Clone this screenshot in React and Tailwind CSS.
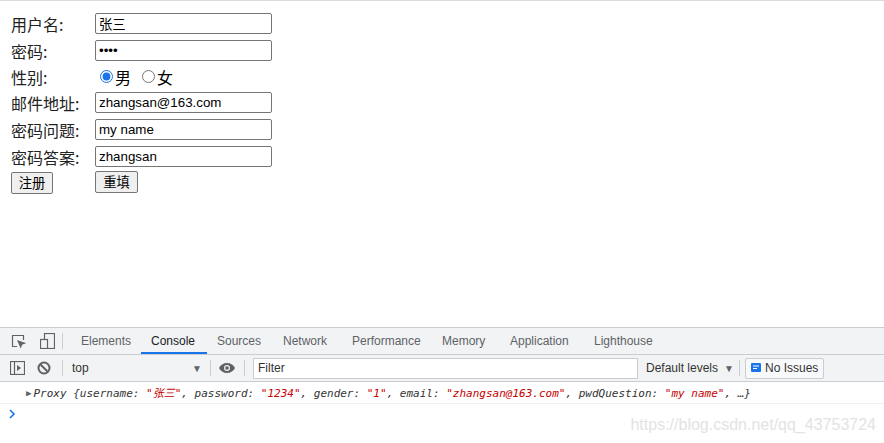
import { useState } from "react"

const cn = { fontFamily: '"Microsoft YaHei", "Noto Sans CJK SC", sans-serif' }
const inputFont = { fontFamily: '"Liberation Sans", "Noto Sans CJK SC", sans-serif' }
const ui = { fontFamily: '"Liberation Sans", Arial, "Noto Sans CJK SC", sans-serif' }
const mono = { fontFamily: '"DejaVu Sans Mono", "Liberation Mono", "Noto Sans CJK SC", monospace' }

function Field({ label, children, h = "h-[27px]" }) {
  return (
    <div className={`flex items-center ${h}`}>
      <div className="w-[84px] text-[16px] text-[#222] leading-none" style={cn}>{label}</div>
      {children}
    </div>
  )
}

function TextBox({ value, type = "text" }) {
  return (
    <input
      type={type}
      defaultValue={value}
      className="w-[177px] h-[21px] border border-[#767676] rounded-[2px] px-[3px] text-[13.33px] text-black bg-white outline-none"
      style={inputFont}
    />
  )
}

const tabs = [
  ["Elements", "w-[70px]"],
  ["Console", "w-[66px]"],
  ["Sources", "w-[66px]"],
  ["Network", "w-[69px]"],
  ["Performance", "w-[90px]"],
  ["Memory", "w-[68px]"],
  ["Application", "w-[84px]"],
  ["Lighthouse", "w-[80px]"],
]

export default function App() {
  const [gender, setGender] = useState("1")

  return (
    <div className="w-[884px] h-[443px] bg-white flex flex-col overflow-hidden">
      <div className="h-px bg-[#dadce0]" />
      <div className="flex-1 pl-[11px] pt-[9px]">
        <Field label="用户名:"><TextBox value="张三" /></Field>
        <Field label="密码:"><TextBox value="1234" type="password" /></Field>
        <Field label="性别:" h="h-[25px]">
          <div className="flex items-center text-[16px] text-black" style={cn}>
            <input type="radio" name="g" checked={gender === "1"} onChange={() => setGender("1")} className="ml-[5px] mr-[2px] w-[13px] h-[13px] accent-[#1a73e8]" />
            <span>男</span>
            <input type="radio" name="g" checked={gender === "0"} onChange={() => setGender("0")} className="ml-[11px] mr-[2px] w-[13px] h-[13px]" />
            <span>女</span>
          </div>
        </Field>
        <Field label="邮件地址:"><TextBox value="zhangsan@163.com" /></Field>
        <Field label="密码问题:"><TextBox value="my name" /></Field>
        <Field label="密码答案:"><TextBox value="zhangsan" /></Field>
        <div className="flex items-center h-[24px]">
          <div className="w-[84px]">
            <button className="h-[22px] w-[42px] border border-[#767676] rounded-[2px] bg-[#efefef] text-[13.33px] text-black" style={cn}>注册</button>
          </div>
          <button className="h-[22px] w-[43px] border border-[#767676] rounded-[2px] bg-[#efefef] text-[13.33px] text-black" style={cn}>重填</button>
        </div>
      </div>

      {/* devtools */}
      <div className="h-[116px] border-t border-[#cbcdd1] flex flex-col text-[12px]" style={ui}>
        <div className="h-[27px] bg-[#f1f3f4] flex items-center border-b border-[#cbcdd1]">
          <div className="w-[34px] flex justify-center pl-[2px]">
            <svg width="15" height="15" viewBox="0 0 15 15" fill="none" stroke="#5f6368" strokeWidth="1.2">
              <path d="M6 12.5H1.5V1.5h11V6" />
              <path d="M7 7l6.5 2.2-2.8 1 -1 2.8z" fill="#5f6368" />
            </svg>
          </div>
          <div className="w-[26px] flex justify-center">
            <svg width="15" height="16" viewBox="0 0 15 16" fill="none" stroke="#5f6368" strokeWidth="1.2">
              <rect x="4.5" y="0.5" width="10" height="15" />
              <rect x="0.5" y="6.5" width="7" height="9" fill="#f1f3f4" />
            </svg>
          </div>
          <div className="w-px h-[16px] bg-[#cbcdd1] ml-[2px] mr-[8px]" />
          {tabs.map(([t, w]) => (
            <div
              key={t}
              className={`h-full flex items-center pl-[10px] pt-[1px] ${w} ${t === "Console" ? "text-[#202124] border-b-2 border-[#1a73e8]" : "text-[#5f6368] border-b-2 border-transparent"}`}
            >
              {t}
            </div>
          ))}
        </div>
        <div className="h-[27px] bg-[#f1f3f4] flex items-center border-b border-[#cbcdd1]">
          <div className="w-[34px] flex justify-center pl-[1px]">
            <svg width="15" height="14" viewBox="0 0 15 14" fill="none" stroke="#5f6368" strokeWidth="1.2">
              <rect x="0.5" y="0.5" width="14" height="13" />
              <path d="M4.5 1v12" />
              <path d="M7 4l4 3-4 3z" fill="#5f6368" stroke="none" />
            </svg>
          </div>
          <div className="w-[20px] flex justify-center">
            <svg width="14" height="14" viewBox="0 0 14 14" fill="none" stroke="#5f6368" strokeWidth="2">
              <circle cx="7" cy="7" r="5.5" />
              <path d="M3 3l8 8" />
            </svg>
          </div>
          <div className="w-px h-[16px] bg-[#cbcdd1] ml-[8px] mr-[9px]" />
          <div className="w-[130px] flex items-center justify-between text-[#333]">
            <span>top</span>
            <span className="text-[#5f6368] text-[10px]">▼</span>
          </div>
          <div className="w-px h-[16px] bg-[#cbcdd1] ml-[8px] mr-[8px]" />
          <svg width="16" height="10" viewBox="0 0 16 10" className="mr-[9px]">
            <path d="M8 0C4.4 0 1.3 2.1 0 5c1.3 2.9 4.4 5 8 5s6.7-2.1 8-5C14.7 2.1 11.6 0 8 0z" fill="#5f6368" />
            <circle cx="8" cy="5" r="3" fill="#f1f3f4" />
            <circle cx="8" cy="5" r="1.8" fill="#5f6368" />
          </svg>
          <div className="w-px h-[16px] bg-[#cbcdd1] mr-[8px]" />
          <div className="w-[385px] h-[21px] bg-white border border-[#cbcdd1] flex items-center px-[4px] text-[#333]">Filter</div>
          <div className="w-[88px] flex items-center justify-between text-[#333] ml-[8px]">
            <span>Default levels</span>
            <span className="text-[#5f6368] text-[10px]">▼</span>
          </div>
          <div className="w-px h-[16px] bg-[#cbcdd1] ml-[5px] mr-[5px]" />
          <div className="h-[21px] border border-[#cbcdd1] rounded-[2px] bg-[#f8f9fa] flex items-center px-[5px] text-[#333]">
            <svg width="10" height="10" viewBox="0 0 10 10" className="mr-[4px]">
              <rect x="0" y="0" width="10" height="9" rx="1" fill="#1a73e8" />
              <path d="M2 3h6M2 5.5h4" stroke="white" strokeWidth="1" />
            </svg>
            No Issues
          </div>
        </div>
        <div className="h-[22px] bg-white border-b border-[#f0f0f0] flex items-center pl-[26px] pt-[3px] text-[11px] italic text-[#333]" style={mono}>
          <span className="text-[#5f6368] text-[9px] not-italic mr-[2px]">▶</span>
          <span>
            Proxy {"{"}username: <span className="text-[#c80000]">"张三"</span>, password: <span className="text-[#c80000]">"1234"</span>, gender: <span className="text-[#c80000]">"1"</span>, email: <span className="text-[#c80000]">"zhangsan@163.com"</span>, pwdQuestion: <span className="text-[#c80000]">"my name"</span>, …{"}"}
          </span>
        </div>
        <div className="flex-1 bg-white flex items-start justify-between pl-[8px] pr-[8px]">
          <svg width="8" height="10" viewBox="0 0 8 10" className="mt-[5px]">
            <path d="M2 1l4 4-4 4" fill="none" stroke="#1a73e8" strokeWidth="1.6" />
          </svg>
          <span className="text-[16px] text-[#e3e3e3] mt-[9px]" style={ui}>https://blog.csdn.net/qq_43753724</span>
        </div>
      </div>
    </div>
  )
}
